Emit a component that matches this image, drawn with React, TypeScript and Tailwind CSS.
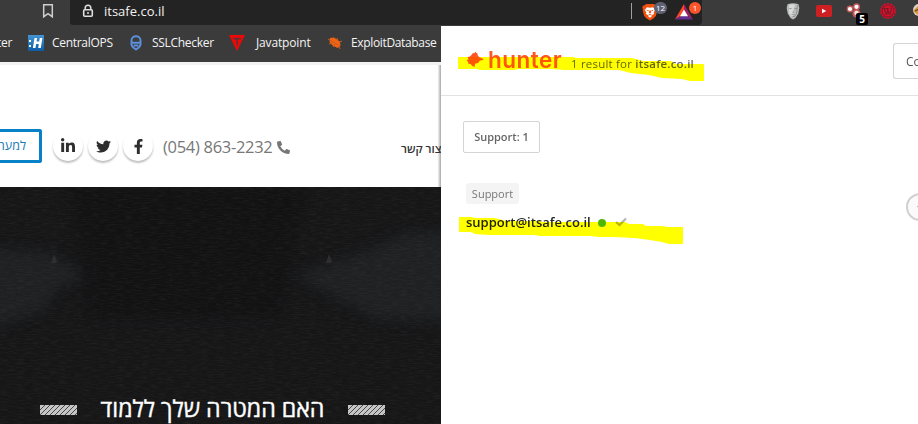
import { FaLinkedinIn, FaTwitter, FaFacebookF, FaPhoneAlt } from "react-icons/fa";

function LockIcon() {
  return (
    <svg width="12" height="14" viewBox="0 0 12 14" className="ml-[12px] shrink-0" fill="none" stroke="#dedede">
      <path d="M3.2 6V4a2.8 2.8 0 0 1 5.6 0v2" strokeWidth="1.5" />
      <rect x="1.7" y="5.7" width="8.6" height="6.6" rx="1" strokeWidth="1.6" />
      <circle cx="6" cy="9" r="1" fill="#dedede" stroke="none" />
    </svg>
  );
}

function BraveIcon() {
  return (
    <svg width="16" height="18" viewBox="0 0 16 18">
      <path d="M4 1h8l1.5 1.6 1.3-.2.9 2.2-.6 1.7.2 1.5-1.5 5.2-2.4 2.5L8 17.5l-3.4-2-2.4-2.5L.7 7.8.9 6.3.3 4.6l.9-2.2 1.3.2z" fill="#f2500f" />
      <path d="M5 4.2l3 .6 3-.6 2.2 2.7-1.5 2.4.3 1.6-2.6 1.7.3.9L8 14.8l-1.7-1.3.3-.9L4 10.9l.3-1.6-1.5-2.4z" fill="#fff" />
      <path d="M4.2 6.7l2.5.5-.4 1.4zM11.8 6.7l-2.5.5.4 1.4zM7.3 7.4h1.4l.4 2.3L8 10.6l-1.1-.9zM6 11.8l2-.9 2 .9-2 .5z" fill="#f2500f" />
    </svg>
  );
}

function BatIcon() {
  return (
    <svg width="18" height="16" viewBox="0 0 18 16">
      <path d="M9 0L0 15.5 5.6 12 9 6z" fill="#ff4724" />
      <path d="M9 0l9 15.5-5.6-3.5L9 6z" fill="#9e1f63" />
      <path d="M0 15.5h18L12.4 12H5.6z" fill="#662d91" />
      <path d="M9 5.5L5 12.3h8z" fill="#fff" />
    </svg>
  );
}

function MaskIcon() {
  return (
    <svg width="14" height="18" viewBox="0 0 14 18" className="ml-[84px] shrink-0">
      <path d="M1.5 2.2Q7 .2 12.5 2.2L13.3 6l-1 5.5L9.5 16 7 17.6 4.5 16 1.7 11.5.7 6z" fill="#b9bcbb" />
      <path d="M3 3q4-1.5 6 0L7 9l1 3-2 3-3-4z" fill="#d8dad9" />
      <path d="M2.5 6.2l3-.3.3.9-2.1.2zM8.3 6l3.2.2-1 .9L8.2 6.8zM7 9l1 2H6.5zM4.7 12.3L7 12l2.5.3-2.5.6z" fill="#8b8e8d" />
      <path d="M11.5 3l-.8 8-2.5 4M6.4 14.6h1.5" stroke="#888" strokeWidth=".8" fill="none" />
    </svg>
  );
}

function DotsIcon() {
  return (
    <div className="relative ml-[14px] h-[22px] w-[23px] shrink-0">
      <svg width="16" height="16" viewBox="0 0 16 16">
        <circle cx="4" cy="6" r="3.4" fill="#c65a5a" />
        <circle cx="10.5" cy="3.8" r="3.5" fill="#c65a5a" />
        <circle cx="10.5" cy="10.5" r="4" fill="#c65a5a" />
        <circle cx="4" cy="6" r="2.1" fill="#fff" />
        <circle cx="10.5" cy="3.8" r="2.1" fill="#fff" />
        <circle cx="10.5" cy="10" r="2.2" fill="#fbe5e5" />
      </svg>
      <span className="absolute left-[10px] top-[10px] flex h-[12px] w-[12px] items-center justify-center rounded-[2px] bg-black text-[10px] font-bold leading-[12px] text-white">5</span>
    </div>
  );
}

function WordpressIcon() {
  return (
    <svg width="16" height="16" viewBox="0 0 16 16" className="ml-[9px] shrink-0">
      <circle cx="8" cy="8" r="7.1" fill="#5b2028" stroke="#d3112b" strokeWidth="1.6" strokeDasharray="2.6 .6" />
      <circle cx="8" cy="8" r="5.7" fill="#d3112b" />
      <path d="M4.2 5.8l2.3 6M7.1 5.4l2.5 6.4M3.4 5.6h2.2M6.3 5.5h2.5M6.5 11.8L8 7.6M9.6 11.8l2-5.6-1.2-1.6" stroke="#4c2028" strokeWidth=".8" fill="none" />
    </svg>
  );
}

function TopBar() {
  return (
    <div className="flex h-[26px] w-[918px] items-start bg-[#3b3b3b]">
      <svg width="12" height="16" viewBox="0 0 12 16" className="ml-[42px] mt-[3px] shrink-0" fill="none" stroke="#cfcfcf" strokeWidth="1.5">
        <path d="M1.7 1.7h8.6v12L6 10.6l-4.3 3.1z" />
      </svg>
      <div className="ml-[16px] flex h-[25px] w-[632px] shrink-0 items-center rounded-bl-[3px] rounded-br-[4px] bg-[#232323] pb-[3px]">
        <LockIcon />
        <span className="ml-[10px] w-[80px] whitespace-nowrap text-[13px] leading-[18px] text-[#f2f2f2]">itsafe.co.il</span>
        <span className="ml-[447px] h-[16px] w-px shrink-0 bg-[#a0a0a0]" />
        <div className="relative ml-[10px] h-[20px] w-[25px] shrink-0 pt-[2px]">
          <BraveIcon />
          <span className="absolute left-[12px] top-[1px] flex h-[12px] w-[13px] items-center justify-center rounded-full bg-[#5f6274] text-[8px] leading-none text-white">12</span>
        </div>
        <div className="relative ml-[8px] h-[20px] w-[25px] shrink-0 pt-[3px]">
          <BatIcon />
          <span className="absolute left-[14px] top-[1px] flex h-[12px] w-[12px] items-center justify-center rounded-full bg-[#fb542b] text-[8px] leading-none text-white">1</span>
        </div>
      </div>
      <div className="flex h-[26px] items-start">
        <div className="flex h-[22px] items-center"><MaskIcon /></div>
        <svg width="16" height="12" viewBox="0 0 16 12" className="ml-[16px] mt-[5px] shrink-0">
          <rect width="16" height="12" rx="2" fill="#ce2023" />
          <path d="M6 3.7v4.6L10.3 6z" fill="#fff" />
        </svg>
        <div className="relative z-10 pt-[3px]"><DotsIcon /></div>
        <div className="ml-[2px] pt-[3px]"><WordpressIcon /></div>
        <svg width="14" height="14" viewBox="0 0 14 14" className="ml-[16px] mt-[3px] shrink-0">
          <circle cx="7" cy="7" r="6" fill="#d8d4cc" />
          <path d="M1 8l5-5 4 4-4 5z" fill="#e29534" />
          <path d="M3 8l4-2 5 3" stroke="#69503a" strokeWidth="1.4" fill="none" />
        </svg>
      </div>
    </div>
  );
}

function BookmarksBar() {
  return (
    <div className="flex h-[36px] shrink-0 items-center bg-[#3b3b3b] pb-[2px] text-[12px] leading-[16px] text-[#f4f4f4] [&>span]:shrink-0 [&>span]:whitespace-nowrap [&>svg]:shrink-0">
      <span className="flex w-[12px] justify-end tracking-[-0.3px]">ter</span>
      <svg width="16" height="16" viewBox="0 0 16 16" className="ml-[16px]">
        <defs><linearGradient id="blue" x2="0" y2="1"><stop stopColor="#4694d2" /><stop offset="1" stopColor="#0a5ca5" /></linearGradient></defs>
        <rect width="16" height="16" fill="url(#blue)" />
        <path d="M1 5h2v2H1zM1 10h2v2H1zM6.5 3h2.6l-.6 3.6h2.7l.6-3.6h2.6L12.8 13h-2.6l.6-4H8.1l-.6 4H4.9z" fill="#fff" />
      </svg>
      <span className="ml-[8px] w-[60px] tracking-[-0.3px]">CentralOPS</span>
      <svg width="12" height="16" viewBox="0 0 12 16" className="ml-[18px]" fill="none" stroke="#5b8fdb" strokeWidth="2">
        <path d="M1.5 9V5.5a4.5 4.2 0 0 1 9 0V9c0 2-2 4-4.5 5.5C3.5 13 1.5 11 1.5 9zM1.5 7.8h9M3.8 10.5h4.4" />
      </svg>
      <span className="ml-[10px] w-[61px] tracking-[-0.3px]">SSLChecker</span>
      <svg width="16" height="16" viewBox="0 0 16 16" className="ml-[16px]">
        <path d="M0 0h16L8 16z" fill="#f00707" />
        <path d="M4 2.7h8v1.7H9v7.1L7.3 9.5V4.4H4.5z" fill="#603033" />
      </svg>
      <span className="ml-[11px] w-[55px] tracking-[-0.15px]">Javatpoint</span>
      <svg width="16" height="14" viewBox="0 0 16 14" className="ml-[16px]">
        <path d="M3 2l4-.5 3 2 3 2.5.5 4-3 2-5-2.5L2.500 6z" fill="#f06414" />
        <path d="M1 3l12 7M2 8l3-1M6 11l2-3M10 2l1 3M12 6l3-1M12 11l1 2" stroke="#c95b21" fill="none" />
      </svg>
      <span className="ml-[8px] w-[86px] tracking-[-0.35px]">ExploitDatabase</span>
    </div>
  );
}

const circle = "flex h-[30px] w-[30px] shrink-0 items-center justify-center rounded-full bg-white text-[#2e2e2e] shadow-[0_2px_2px_rgba(0,0,0,0.25)]";

function Hatch() {
  return (
    <svg width="37" height="10" viewBox="0 0 37 10" className="shrink-0">
      <defs><pattern id="hatch" width="5" height="10" patternUnits="userSpaceOnUse">
        <rect width="5" height="10" fill="#c5c5c5" />
        <path d="M-10 10L0 0M-5 10L5 0M0 10L10 0" stroke="#2a2a2a" strokeWidth=".8" />
      </pattern></defs>
      <rect width="37" height="10" fill="url(#hatch)" />
    </svg>
  );
}

function Site() {
  return (
    <div className="flex h-[398px] w-[441px] shrink-0 flex-col overflow-hidden">
      <BookmarksBar />
      <div className="flex h-[125px] shrink-0 items-start border-t-[3px] border-[#f3f1f2] bg-gradient-to-r from-white from-[99.2%] to-[#a8a8a8] pt-[64px]">
        <div className="flex h-[34px] w-[42px] shrink-0 items-center justify-end rounded-r-[3px] border-3 border-l-0 border-[#0782c6] pr-[13px]">
          <span className="whitespace-nowrap text-[12.5px] text-[#1779b5]" dir="rtl">למער</span>
        </div>
        <div className="ml-[11px] mt-[2px] flex gap-[5px]">
          <div className={circle}><FaLinkedinIn size={16} /></div>
          <div className={circle}><FaTwitter size={15} /></div>
          <div className={circle}><FaFacebookF size={15} /></div>
        </div>
        <div className="ml-[10px] mt-[6px] flex w-[128px] shrink-0 items-center text-[#777]">
          <span className="w-[114px] shrink-0 whitespace-nowrap text-[16.5px] leading-[24px] tracking-[-0.3px]">(054) 863-2232</span>
          <FaPhoneAlt size={13} className="shrink-0" />
        </div>
        <span className="ml-[110px] mt-[11px] w-[40px] shrink-0 whitespace-nowrap text-[11.5px] font-semibold leading-[18px] text-[#333]">צור קשר</span>
      </div>
      <div className="relative h-[237px] shrink-0 bg-[#161617]">
        <svg width="441" height="237" className="absolute inset-0">
          <defs>
            <filter id="grain" x="0" y="0" width="100%" height="100%">
              <feTurbulence type="fractalNoise" baseFrequency=".12 .8" numOctaves="3" seed="4" />
              <feColorMatrix values="0 0 0 0 .3  0 0 0 0 .32  0 0 0 0 .35  .16 0 0 0 -.065" />
            </filter>
            <filter id="soft" colorInterpolationFilters="sRGB"><feGaussianBlur stdDeviation="6" /></filter>
          </defs>
          <g fill="#1e2022" filter="url(#soft)">
            <path d="M-20 60L50 65l38 24-33 15-10 20-65 20z" />
            <path d="M460 45h-50l-55 23-60 20 35 20 50 25h80z" />
          </g>
          <path d="M70 0h235l-25 130H90z" fill="#101011" opacity=".6" filter="url(#soft)" />
          <rect width="441" height="237" filter="url(#grain)" />
          <path d="M54 67l3 7-1 2h-5zM329 67l3 7-1 2h-5z" fill="#302e2c" />
        </svg>
        <div className="relative flex h-[237px] items-start pl-[40px] pt-[206px]">
          <div className="mt-[12px]"><Hatch /></div>
          <span className="ml-[23px] flex w-[225px] justify-center whitespace-nowrap text-[23.2px] leading-[31px] text-white [-webkit-text-stroke:0.4px_white]" dir="rtl">האם המטרה שלך ללמוד</span>
          <div className="ml-[23px] mt-[12px]"><Hatch /></div>
        </div>
      </div>
    </div>
  );
}

function Popup() {
  return (
    <div className="relative isolate flex h-[398px] w-[477px] shrink-0 flex-col bg-white">
      <div className="flex h-[70px] shrink-0 items-start border-b border-[#e2e2e2]">
        <svg width="18" height="17" viewBox="0 0 18 17" className="ml-[25px] mt-[25px] shrink-0">
          <path d="M5.500 4L7 1.800 8 2.500 9.500.700l1 1.300 1 .4.300 2.200 1.600 1.700 4.300 1.700-1.300 1.200-2.400.4-2 2.300-2.900.8-.6 3.200-2.100-.9-1.900-2-2.200-.2v-1.600L.800 9.500l1.700-1.600L1.500 6l2-.3z" fill="#ff5722" />
        </svg>
        <span className="ml-[4px] mt-[20px] w-[76px] shrink-0 font-[Inter] text-[22.5px] font-semibold leading-[28px] tracking-[0.5px] text-[#ff5722]">hunter</span>
        <span className="ml-[7px] mt-[30px] whitespace-nowrap text-[11.5px] leading-[16px] tracking-[0.2px] text-[#666]">1 result for <b className="font-semibold">itsafe.co.il</b></span>
        <div className="ml-auto mt-[17px] h-[36px] w-[25px] shrink-0 overflow-hidden rounded-l-[3px] border border-r-0 border-[#d4d4d4] pl-[12px] text-[12px] leading-[35px] text-[#555]">Co</div>
      </div>
      <div className="ml-[22px] mt-[25px] flex h-[32px] w-[77px] shrink-0 items-center justify-center whitespace-nowrap rounded-[2px] border border-[#d4d4d4] text-[11px] font-semibold text-[#666]">Support: 1</div>
      <div className="ml-[25px] mt-[30px] flex h-[21px] w-[53px] shrink-0 items-center justify-center rounded-[3px] bg-[#f4f4f4] pt-[1px] text-[11px] text-[#777]">Support</div>
      <div className="ml-[25px] mt-[8px] flex h-[20px] items-center">
        <span className="w-[124px] shrink-0 whitespace-nowrap text-[13px] font-semibold leading-[20px] text-[#222]">support@itsafe.co.il</span>
        <span className="ml-[8px] mt-[1px] h-[8px] w-[8px] rounded-full bg-[#4fb700]" />
        <svg width="12" height="10" viewBox="0 0 12 10" className="ml-[9px]"><path d="M1 5l3.5 3L11 1.5" stroke="#b5b5b5" strokeWidth="2.2" fill="none" /></svg>
      </div>
      <div className="absolute left-[465px] top-[167px] h-[28px] w-[28px] rounded-full border-2 border-[#d0d0d0] bg-[#fafafa] pl-[9px] text-[12px] leading-[22px] text-[#666]">‹</div>
      <svg width="477" height="398" className="pointer-events-none absolute inset-0 mix-blend-multiply" fill="#ff0">
        <path d="M17 31h115l3 1h56l11 3h28l4 3h29v17h-14l-8-2-20-1-13-3-18-2-12-3h-54l-15-1H78l-5 1H39l-3-1H17z" />
        <path d="M18 191h13l2 1h20l13 3h32l3 1h83l4 2h14l3 2h16l6 1h15v17h-14l-7-2-12-2-15-2-21-1h-15l-9-1H98l-3-1H47l-13-1-4-2H18z" />
      </svg>
    </div>
  );
}

export default function App() {
  return (
    <div className="h-[424px] w-[918px] overflow-hidden bg-white font-['Open_Sans','Noto_Sans',sans-serif]">
      <TopBar />
      <div className="flex">
        <Site />
        <Popup />
      </div>
    </div>
  );
}
